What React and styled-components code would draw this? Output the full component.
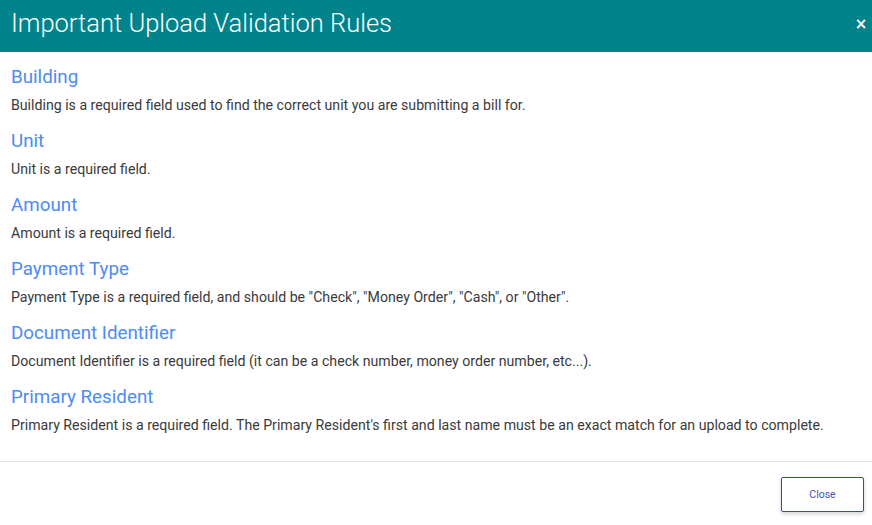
import React from "react";
import styled, { createGlobalStyle } from "styled-components";

const Global = createGlobalStyle`
  html, body { margin: 0; padding: 0; background: #fff; }
  body { font-family: Roboto, "Noto Sans", sans-serif; }
  * { box-sizing: border-box; }
`;

const Modal = styled.div`
  width: 872px;
  height: 525px;
  display: flex;
  flex-direction: column;
  background: #fff;
`;

const Header = styled.header`
  height: 52px;
  background: #00838b;
  display: flex;
  align-items: center;
  justify-content: space-between;
  padding: 0 4px 0 11px;
`;

const Title = styled.h1`
  margin: 0;
  color: #fff;
  font-size: 25.5px;
  font-weight: 300;
  line-height: 1;
  padding-bottom: 4px;
`;

const CloseX = styled.button`
  border: 0;
  background: transparent;
  color: #fff;
  font-family: "DejaVu Sans", sans-serif;
  font-size: 15px;
  font-weight: 700;
  padding: 0;
  width: 14px;
  line-height: 1;
  cursor: pointer;
  margin-bottom: 4px;
`;

const Body = styled.div`
  flex: 1;
  padding: 12px 11px 0;
  display: flex;
  flex-direction: column;
  border-bottom: 1px solid #e3e3e3;
`;

const Rule = styled.section`
  height: 64px;
`;

const RuleTitle = styled.h2`
  margin: 0;
  font-size: 18.8px;
  font-weight: 400;
  color: #4d8bf5;
  line-height: 26px;
`;

const RuleText = styled.p`
  margin: 6px 0 0;
  font-size: 14.15px;
  color: #3a3a3a;
  line-height: 18px;
`;

const Footer = styled.footer`
  height: 63px;
  display: flex;
  justify-content: flex-end;
  align-items: flex-start;
  padding: 15px 8px 0 0;
`;

const Button = styled.button`
  width: 83px;
  height: 35px;
  border: 1px solid #3949ab;
  border-radius: 2px;
  background: #fff;
  color: #4855b5;
  font-family: Roboto, sans-serif;
  font-size: 10.5px;
  box-shadow: 0 2px 4px rgba(0,0,0,0.18);
  cursor: pointer;
`;

const rules = [
  ["Building", "Building is a required field used to find the correct unit you are submitting a bill for."],
  ["Unit", "Unit is a required field."],
  ["Amount", "Amount is a required field."],
  ["Payment Type", 'Payment Type is a required field, and should be "Check", "Money Order", "Cash", or "Other".'],
  ["Document Identifier", "Document Identifier is a required field (it can be a check number, money order number, etc...)."],
  ["Primary Resident", "Primary Resident is a required field. The Primary Resident's first and last name must be an exact match for an upload to complete."],
];

export default function App() {
  return (
    <>
      <Global />
      <Modal>
        <Header>
          <Title>Important Upload Validation Rules</Title>
          <CloseX aria-label="close">×</CloseX>
        </Header>
        <Body>
          {rules.map(([t, d]) => (
            <Rule key={t}>
              <RuleTitle>{t}</RuleTitle>
              <RuleText>{d}</RuleText>
            </Rule>
          ))}
        </Body>
        <Footer>
          <Button>Close</Button>
        </Footer>
      </Modal>
    </>
  );
}
